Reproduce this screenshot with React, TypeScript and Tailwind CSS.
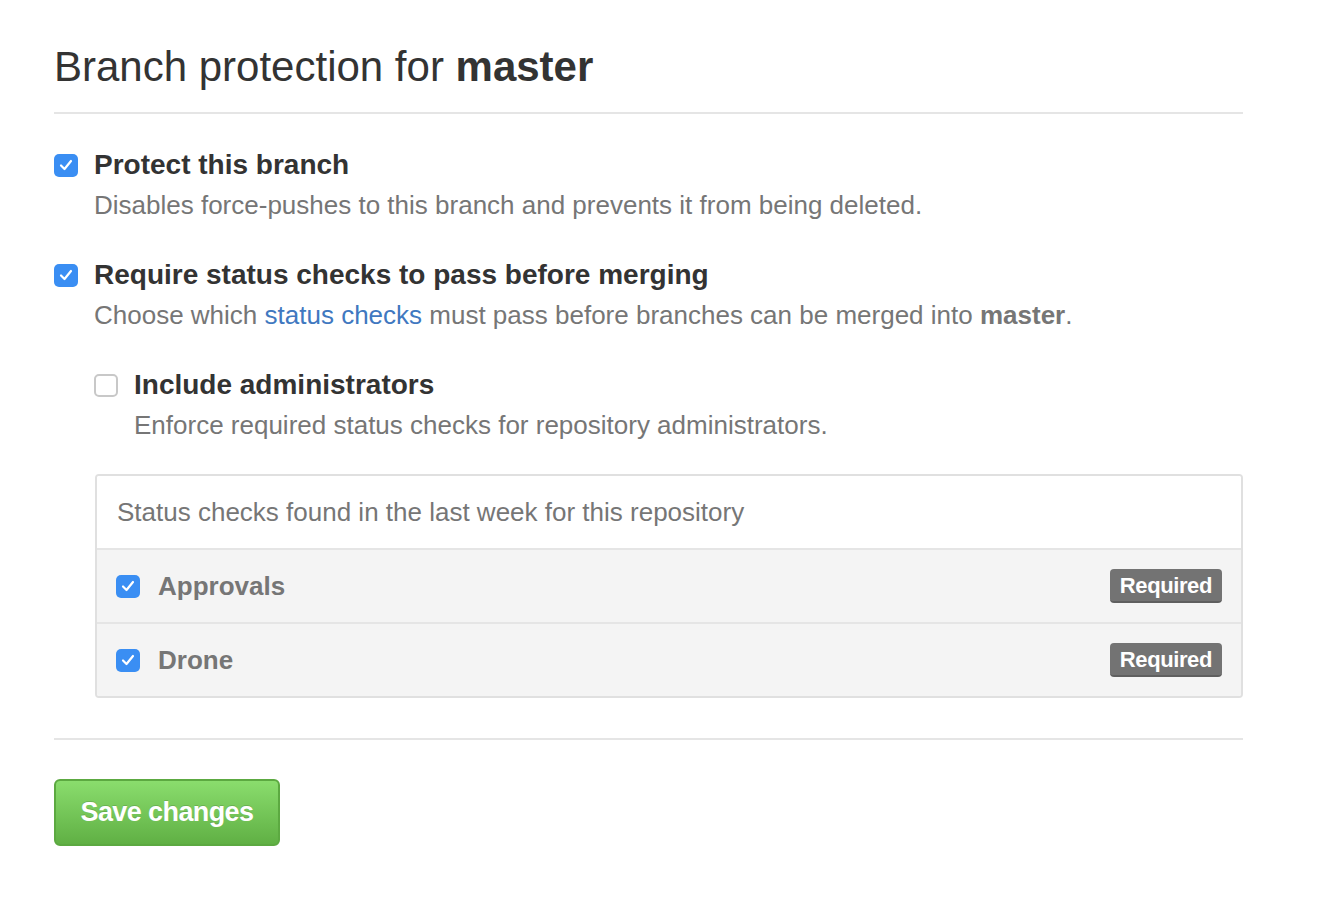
import React from 'react';

const font = { fontFamily: '"Liberation Sans", Arial, Helvetica, sans-serif' };

const Check = ({ checked }: { checked: boolean }) =>
  checked ? (
    <span className="flex h-[23px] w-[24px] shrink-0 items-center justify-center rounded-[5px] bg-[#3a8ef3]">
      <svg width="14" height="12" viewBox="0 0 14 12" fill="none">
        <path d="M2 6.5 L5.5 10 L12 2" stroke="white" strokeWidth="2.2" strokeLinecap="round" strokeLinejoin="round" />
      </svg>
    </span>
  ) : (
    <span className="h-[23px] w-[24px] shrink-0 rounded-[5px] border-2 border-[#c8c8c8] bg-white" />
  );

const Option = ({
  checked,
  title,
  children,
  className,
}: {
  checked: boolean;
  title: string;
  children: React.ReactNode;
  className?: string;
}) => (
  <div className={className}>
    <div className="flex items-center gap-[16px]">
      <Check checked={checked} />
      <div className="text-[28px] font-bold leading-[40px] text-[#333]">{title}</div>
    </div>
    <div className="pl-[40px] text-[26px] leading-[40px] text-[#767676]">{children}</div>
  </div>
);

const StatusRow = ({ name }: { name: string }) => (
  <div className="flex h-[74px] items-center justify-between border-t-2 border-[#e5e5e5] bg-[#f4f4f4] pl-[19px] pr-[19px]">
    <div className="flex items-center gap-[18px]">
      <Check checked />
      <span className="text-[26px] font-bold text-[#767676]">{name}</span>
    </div>
    <span className="flex h-[34px] items-center rounded-[4px] border-b-2 border-[#5f5f5f] bg-[#737373] px-[10px] text-[22px] font-bold tracking-[-0.4px] text-white">
      Required
    </span>
  </div>
);

export default function App() {
  return (
    <div className="min-h-screen bg-white" style={font}>
      <div className="w-[1243px] pl-[54px]">
        <h2 className="border-b-2 border-[#e5e5e5] pb-[20px] pt-[42px] text-[42px] font-normal leading-[50px] text-[#333]">
          Branch protection for <strong className="font-bold">master</strong>
        </h2>

        <Option checked title="Protect this branch" className="mt-[31px]">
          Disables force-pushes to this branch and prevents it from being deleted.
        </Option>

        <Option checked title="Require status checks to pass before merging" className="mt-[30px]">
          Choose which <a className="text-[#4078c0]">status checks</a> must pass before branches can be
          merged into <strong className="font-bold">master</strong>.
        </Option>

        <div className="pl-[41px]">
          <Option checked={false} title="Include administrators" className="-ml-px mt-[30px]">
            Enforce required status checks for repository administrators.
          </Option>

          <div className="mt-[29px] overflow-hidden rounded-[4px] border-2 border-[#e0e0e0]">
            <div className="flex h-[72px] items-center bg-white pl-[20px] text-[26px] text-[#767676]">
              Status checks found in the last week for this repository
            </div>
            <StatusRow name="Approvals" />
            <StatusRow name="Drone" />
          </div>
        </div>

        <div className="mt-[40px] border-t-2 border-[#e5e5e5]" />

        <button className="mt-[39px] h-[67px] w-[226px] rounded-[6px] border-2 border-[#5ca941] bg-gradient-to-b from-[#8add6d] to-[#60b044] text-[27px] font-bold tracking-[-0.6px] text-white [text-shadow:0_-1px_0_rgba(0,0,0,0.15)]">
          Save changes
        </button>
      </div>
    </div>
  );
}
